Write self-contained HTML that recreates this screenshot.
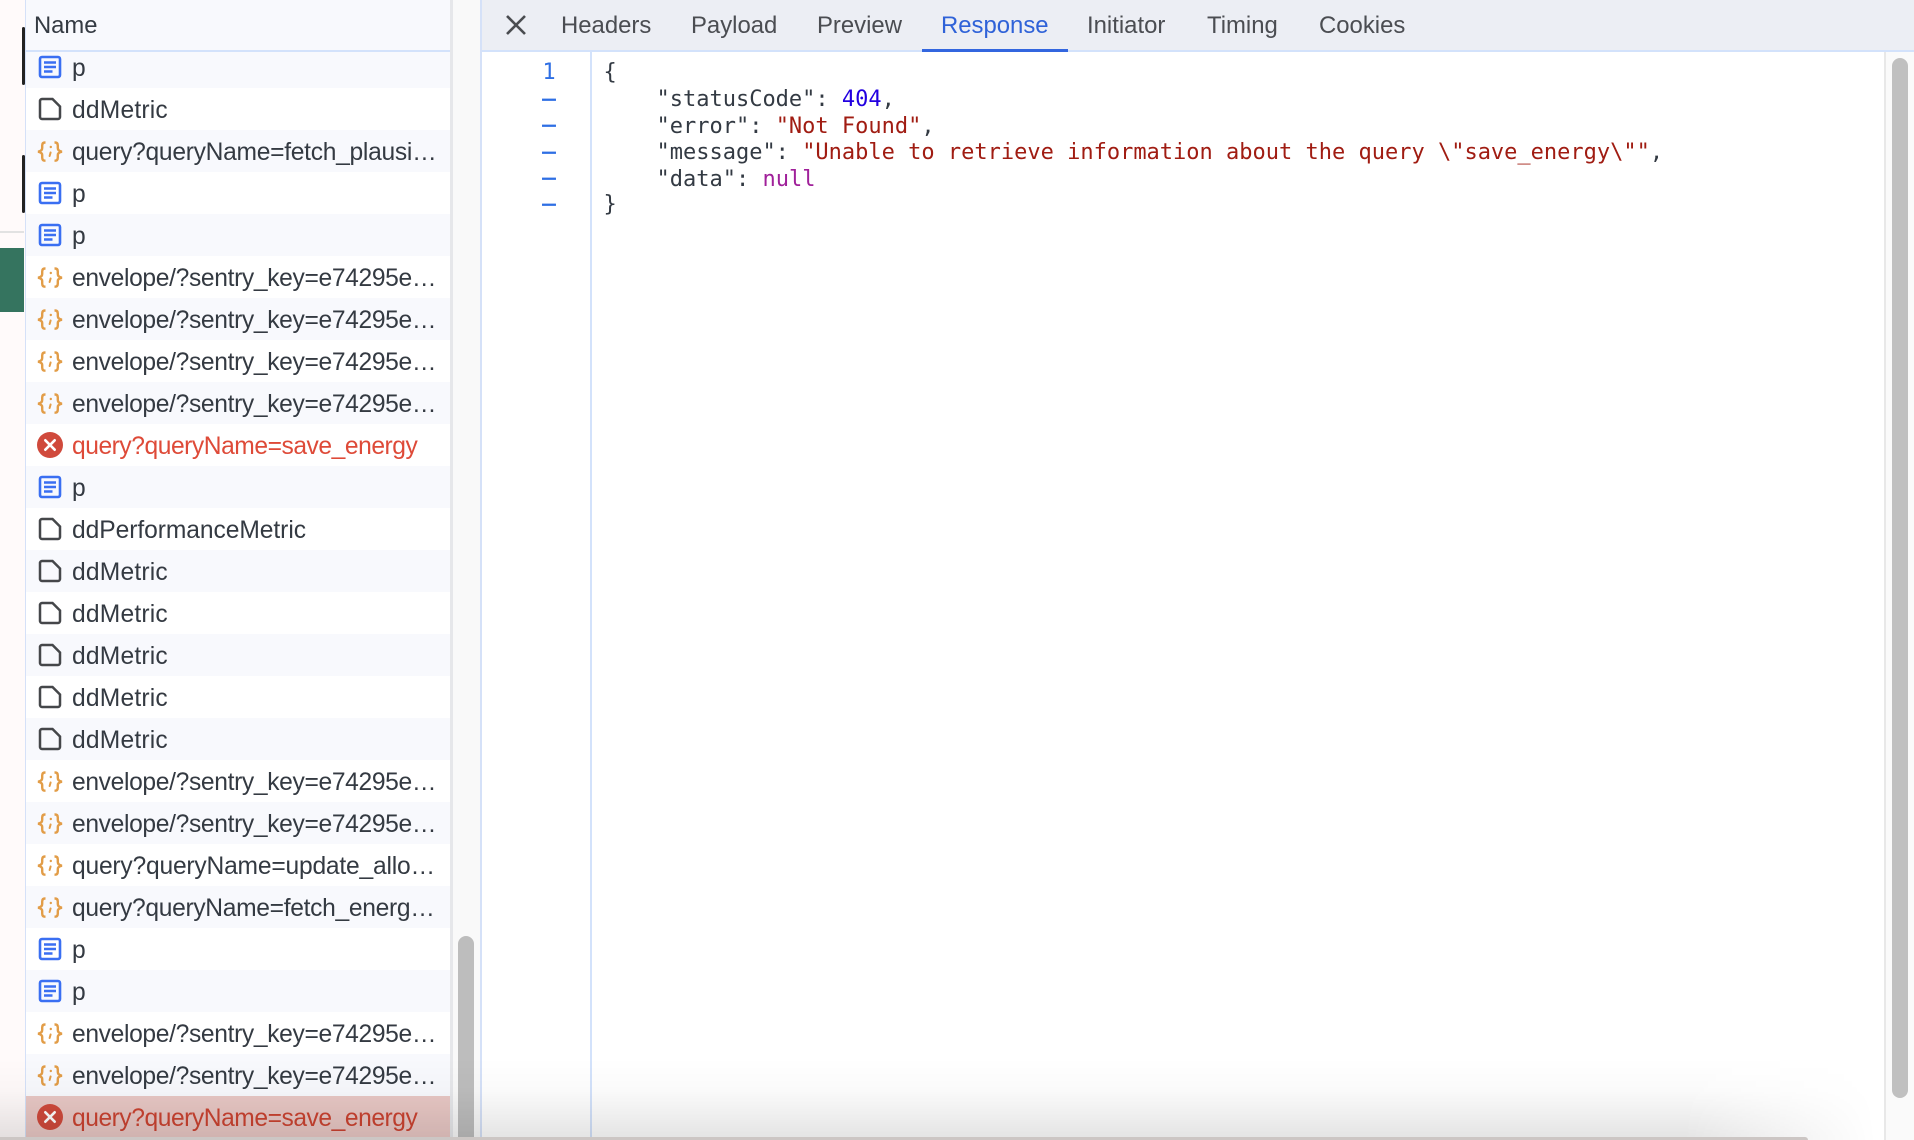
<!DOCTYPE html>
<html><head><meta charset="utf-8"><title>Network</title>
<style>
html,body{margin:0;padding:0}
body{width:1914px;height:1140px;position:relative;overflow:hidden;background:#fffafa;font-family:"Liberation Sans",Arial,sans-serif}
.a{position:absolute}
#list{left:26px;top:46px;width:424px}
.r{position:relative;height:42px;background:#fff;color:#343a42;font-size:24.6px;line-height:42px;white-space:nowrap}
.r:nth-child(odd){background:#f8f9fd}
.r svg{position:absolute;left:11px;top:8px;width:26px;height:26px}
.r span{position:absolute;left:46px;top:2px}
.v span{letter-spacing:-.34px}
.m span{letter-spacing:.2px}
.e{color:#de4a38}
.e span{letter-spacing:-.45px}
.r.s{background:#e9c8c5;color:#cb4331}
.t{position:absolute;top:0;line-height:51px;font-size:23.9px;color:#4b4d52;white-space:nowrap}
.c{position:absolute;left:603.500px;font:22px/26.4px "DejaVu Sans Mono",monospace;color:#333a43;white-space:pre}
.n{position:absolute;left:536px;width:26px;text-align:center;font:22px/26.4px "DejaVu Sans Mono",monospace;color:#2f6fe4}
.h{-webkit-text-stroke:.7px #2f6fe4}
</style></head><body>
<svg width="0" height="0" style="position:absolute"><defs>
<g id="d" fill="none" stroke="#3a6ff2" stroke-width="2.600"><rect x="3" y="3" width="20" height="20" rx="2"/><path d="M7 8.500h12M7 13h12M7 17.500h8.500"/></g>
<g id="f" fill="none" stroke="#45474a" stroke-width="2.500"><path d="M5 3H15.500L23 10.500V21a2 2 0 0 1-2 2H5a2 2 0 0 1-2-2V5a2 2 0 0 1 2-2Z"/></g>
<g id="j" fill="none" stroke="#e29d48" stroke-width="2.400"><path d="M8.500 4.500H8Q5.200 4.500 5.200 7.500V10Q5.200 13 1 13.700 5.200 14.500 5.200 17V19.500Q5.200 22.700 8 22.700H8.500M17.500 4.500H18Q20.800 4.500 20.800 7.500V10Q20.800 13 25 13.700 20.800 14.500 20.800 17V19.500Q20.800 22.700 18 22.700H17.500"/><path d="M13.600 14.500 12.600 18" stroke-width="2" stroke-linecap="round"/><circle cx="13.800" cy="9" r="1.200" fill="#e29d48" stroke="none"/></g>
<g id="x"><circle cx="13" cy="13" r="13" fill="#d04a3c"/><path d="M8.300 8.300l9.400 9.400M17.700 8.300l-9.400 9.400" stroke="#fff" stroke-width="2.600" stroke-linecap="round"/></g>
</defs></svg>

<div class="a" style="left:22px;top:27px;width:3px;height:58px;background:#222;border-radius:2px"></div>
<div class="a" style="left:22px;top:155px;width:3px;height:58px;background:#222;border-radius:2px"></div>
<div class="a" style="left:0;top:231px;width:24px;height:2px;background:#e2e2e2"></div>
<div class="a" style="left:0;top:248px;width:24px;height:64px;background:#35745f"></div>

<div class="a" style="left:24.500px;top:0;width:1.500px;height:1140px;background:#d5e1f8"></div>
<div class="a" style="left:26px;top:0;width:424px;height:1140px;background:#fff"></div>
<div id="list" class="a">
<div class="r"><svg viewBox="0 0 26 26"><use href="#d"/></svg><span>p</span></div>
<div class="r m"><svg viewBox="0 0 26 26"><use href="#f"/></svg><span>ddMetric</span></div>
<div class="r v"><svg viewBox="0 0 26 26"><use href="#j"/></svg><span style="letter-spacing:-.28px">query?queryName=fetch_plausi…</span></div>
<div class="r"><svg viewBox="0 0 26 26"><use href="#d"/></svg><span>p</span></div>
<div class="r"><svg viewBox="0 0 26 26"><use href="#d"/></svg><span>p</span></div>
<div class="r v"><svg viewBox="0 0 26 26"><use href="#j"/></svg><span>envelope/?sentry_key=e74295e…</span></div>
<div class="r v"><svg viewBox="0 0 26 26"><use href="#j"/></svg><span>envelope/?sentry_key=e74295e…</span></div>
<div class="r v"><svg viewBox="0 0 26 26"><use href="#j"/></svg><span>envelope/?sentry_key=e74295e…</span></div>
<div class="r v"><svg viewBox="0 0 26 26"><use href="#j"/></svg><span>envelope/?sentry_key=e74295e…</span></div>
<div class="r e"><svg viewBox="0 0 26 26"><use href="#x"/></svg><span>query?queryName=save_energy</span></div>
<div class="r"><svg viewBox="0 0 26 26"><use href="#d"/></svg><span>p</span></div>
<div class="r"><svg viewBox="0 0 26 26"><use href="#f"/></svg><span style="letter-spacing:-.06px">ddPerformanceMetric</span></div>
<div class="r m"><svg viewBox="0 0 26 26"><use href="#f"/></svg><span>ddMetric</span></div>
<div class="r m"><svg viewBox="0 0 26 26"><use href="#f"/></svg><span>ddMetric</span></div>
<div class="r m"><svg viewBox="0 0 26 26"><use href="#f"/></svg><span>ddMetric</span></div>
<div class="r m"><svg viewBox="0 0 26 26"><use href="#f"/></svg><span>ddMetric</span></div>
<div class="r m"><svg viewBox="0 0 26 26"><use href="#f"/></svg><span>ddMetric</span></div>
<div class="r v"><svg viewBox="0 0 26 26"><use href="#j"/></svg><span>envelope/?sentry_key=e74295e…</span></div>
<div class="r v"><svg viewBox="0 0 26 26"><use href="#j"/></svg><span>envelope/?sentry_key=e74295e…</span></div>
<div class="r"><svg viewBox="0 0 26 26"><use href="#j"/></svg><span style="letter-spacing:-.2px">query?queryName=update_allo…</span></div>
<div class="r"><svg viewBox="0 0 26 26"><use href="#j"/></svg><span style="letter-spacing:-.31px">query?queryName=fetch_energ…</span></div>
<div class="r"><svg viewBox="0 0 26 26"><use href="#d"/></svg><span>p</span></div>
<div class="r"><svg viewBox="0 0 26 26"><use href="#d"/></svg><span>p</span></div>
<div class="r v"><svg viewBox="0 0 26 26"><use href="#j"/></svg><span>envelope/?sentry_key=e74295e…</span></div>
<div class="r v"><svg viewBox="0 0 26 26"><use href="#j"/></svg><span>envelope/?sentry_key=e74295e…</span></div>
<div class="r e s"><svg viewBox="0 0 26 26"><use href="#x"/></svg><span>query?queryName=save_energy</span></div>
</div>
<div class="a" style="left:26px;top:0;width:424px;height:50px;background:#f8f9fd"></div>
<div class="a" style="left:26px;top:50px;width:424px;height:2px;background:#d3e2fb"></div>
<div class="a" style="left:34px;top:0;line-height:51px;font-size:23.8px;color:#343a42">Name</div>

<div class="a" style="left:450px;top:0;width:3px;height:1140px;background:#e6e7ea"></div>
<div class="a" style="left:453px;top:0;width:27px;height:1140px;background:#f9f9f9"></div>
<div class="a" style="left:458px;top:936px;width:16px;height:204px;background:#bdbdbd;border-radius:8px 8px 0 0"></div>
<div class="a" style="left:480px;top:0;width:2px;height:1140px;background:#d5e1f8"></div>

<div class="a" style="left:482px;top:0;width:1432px;height:1140px;background:#fff"></div>
<div class="a" style="left:482px;top:0;width:1432px;height:50px;background:#eceef4"></div>
<div class="a" style="left:482px;top:50px;width:1432px;height:2px;background:#d3e2fb"></div>
<svg class="a" style="left:504px;top:12.500px" width="24" height="24" viewBox="0 0 24 24"><path d="M3 3l18 18M21 3L3 21" stroke="#4a4c50" stroke-width="2.600" fill="none"/></svg>
<div class="t" style="left:561px">Headers</div>
<div class="t" style="left:691px">Payload</div>
<div class="t" style="left:817px">Preview</div>
<div class="t" style="left:941px;color:#2f62d8">Response</div>
<div class="a" style="left:922px;top:49px;width:146px;height:3px;background:#3366df"></div>
<div class="t" style="left:1087px">Initiator</div>
<div class="t" style="left:1207px">Timing</div>
<div class="t" style="left:1319px">Cookies</div>

<div class="a" style="left:590px;top:52px;width:2px;height:1088px;background:#d3e2fb"></div>
<div class="n" style="top:60px">1</div>
<div class="n h" style="top:87px">–</div>
<div class="n h" style="top:113.400px">–</div>
<div class="n h" style="top:139.800px">–</div>
<div class="n h" style="top:166.200px">–</div>
<div class="n h" style="top:192px">–</div>
<div class="c" style="top:60px">{</div>
<div class="c" style="top:87.400px">    "statusCode": <span style="color:#2200e0">404</span>,</div>
<div class="c" style="top:113.800px">    "error": <span style="color:#a01c12">"Not Found"</span>,</div>
<div class="c" style="top:140.200px">    "message": <span style="color:#a01c12">"Unable to retrieve information about the query \"save_energy\""</span>,</div>
<div class="c" style="top:166.600px">    "data": <span style="color:#a0209a">null</span></div>
<div class="c" style="top:192px">}</div>

<div class="a" style="left:1884px;top:52px;width:2px;height:1088px;background:#e8e8e8"></div>
<div class="a" style="left:1886px;top:52px;width:28px;height:1088px;background:#fafafa"></div>
<div class="a" style="left:1892px;top:58px;width:16px;height:1040px;background:#c0c0c0;border-radius:8px"></div>

<div class="a" style="left:0;top:1058px;width:1914px;height:82px;background:linear-gradient(to bottom,rgba(0,0,0,0),rgba(0,0,0,.02) 40%,rgba(0,0,0,.1) 95%);-webkit-mask-image:linear-gradient(to right,#000 88%,transparent 98%);mask-image:linear-gradient(to right,#000 88%,transparent 98%)"></div>
<div class="a" style="left:0;top:1137px;width:1808px;height:3px;background:#ccc6c4;border-radius:0 4px 0 0"></div>
</body></html>
